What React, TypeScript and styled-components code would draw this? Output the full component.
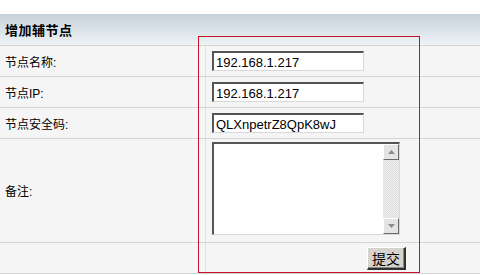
import styled, { createGlobalStyle } from "styled-components"

const GlobalStyle = createGlobalStyle`
  body {
    margin: 0;
    background: #ffffff;
    font-family: "Liberation Sans", "Noto Sans CJK SC", sans-serif;
    font-size: 12px;
    color: #000000;
  }
`

const Page = styled.div`
  padding-top: 14px;
  position: relative;
`

const Header = styled.div`
  height: 31px;
  display: flex;
  align-items: center;
  padding-left: 5px;
  background: linear-gradient(#c7d3dc, #eef2f5);
  border-bottom: 1px solid #d6d6d6;
  font-weight: bold;
  font-size: 13px;
  letter-spacing: 0.5px;
`

const Row = styled.div<{ $h: number }>`
  display: grid;
  grid-template-columns: 205px 1fr;
  height: ${p => p.$h}px;
  background: #f5f5f5;
  border-bottom: 1px solid #d4d4d4;
`

const Label = styled.div`
  display: flex;
  align-items: center;
  padding-left: 5px;
  font-size: 12px;
`

const Value = styled.div<{ $end?: boolean; $top?: boolean }>`
  display: flex;
  align-items: ${p => (p.$top ? "flex-start" : "center")};
  justify-content: ${p => (p.$end ? "flex-end" : "flex-start")};
  padding-left: 6px;
  padding-top: ${p => (p.$top ? "3px" : "0")};
  padding-right: ${p => (p.$end ? "74px" : "0")};
  border-left: 1px solid #e2e2e2;
`

const Input = styled.input`
  box-sizing: border-box;
  width: 152px;
  height: 20px;
  margin: 0;
  padding: 1px 2px 0;
  font-family: "Liberation Sans", Arial, sans-serif;
  font-size: 13px;
  color: #000;
  background: #fff;
  border-style: solid;
  border-width: 2px 1px 1px 2px;
  border-color: #555 #d8d8d8 #d8d8d8 #555;
  outline: none;
`

const AreaBox = styled.div`
  box-sizing: border-box;
  width: 188px;
  height: 93px;
  display: flex;
  background: #fff;
  border-style: solid;
  border-width: 2px 1px 1px 2px;
  border-color: #555 #d8d8d8 #d8d8d8 #555;
`

const Area = styled.textarea`
  flex: 1;
  border: none;
  resize: none;
  outline: none;
  margin: 0;
  padding: 2px;
  font-family: "Liberation Sans", Arial, sans-serif;
  font-size: 13px;
`

const ScrollBar = styled.div`
  width: 16px;
  display: flex;
  flex-direction: column;
  background-color: #eeeeee;
  background-image: repeating-conic-gradient(#d8d8d8 0 25%, #f4f4f4 0 50%);
  background-size: 2px 2px;
`

const ScrollBtn = styled.div`
  box-sizing: border-box;
  width: 16px;
  height: 16px;
  display: flex;
  align-items: center;
  justify-content: center;
  background: #e4e4e4;
  border-style: solid;
  border-width: 1px;
  border-color: #ffffff #6a6a6a #6a6a6a #ffffff;
`

const Track = styled.div`
  flex: 1;
`

const Button = styled.button`
  box-sizing: border-box;
  width: 39px;
  height: 23px;
  margin: 0;
  padding: 0;
  font-family: "Noto Sans CJK SC", sans-serif;
  font-size: 14px;
  color: #000;
  background: #d6d3cc;
  border-style: solid;
  border-width: 1px 2px 2px 1px;
  border-color: #ffffff #303030 #303030 #ffffff;
  box-shadow: inset -1px -1px 0 #8a8a8a;
`

const Highlight = styled.div`
  position: absolute;
  left: 198px;
  top: 36px;
  width: 220px;
  height: 235px;
  border: 1px solid #c4122a;
  pointer-events: none;
`

const Arrow = ({ up }: { up?: boolean }) => (
  <svg width="7" height="4" viewBox="0 0 7 4">
    <path d={up ? "M0 4 L3.5 0 L7 4 Z" : "M0 0 L3.5 4 L7 0 Z"} fill="#8c8c8c" />
  </svg>
)

const fields = [
  { label: "节点名称:", value: "192.168.1.217" },
  { label: "节点IP:", value: "192.168.1.217" },
  { label: "节点安全码:", value: "QLXnpetrZ8QpK8wJ" },
]

export default function App() {
  return (
    <Page>
      <GlobalStyle />
      <Header>增加辅节点</Header>
      {fields.map(f => (
        <Row key={f.label} $h={30}>
          <Label>{f.label}</Label>
          <Value>
            <Input defaultValue={f.value} />
          </Value>
        </Row>
      ))}
      <Row $h={103}>
        <Label>备注:</Label>
        <Value $top>
          <AreaBox>
            <Area />
            <ScrollBar>
              <ScrollBtn>
                <Arrow up />
              </ScrollBtn>
              <Track />
              <ScrollBtn>
                <Arrow />
              </ScrollBtn>
            </ScrollBar>
          </AreaBox>
        </Value>
      </Row>
      <Row $h={30}>
        <Label />
        <Value $end>
          <Button>提交</Button>
        </Value>
      </Row>
      <Highlight />
    </Page>
  )
}
